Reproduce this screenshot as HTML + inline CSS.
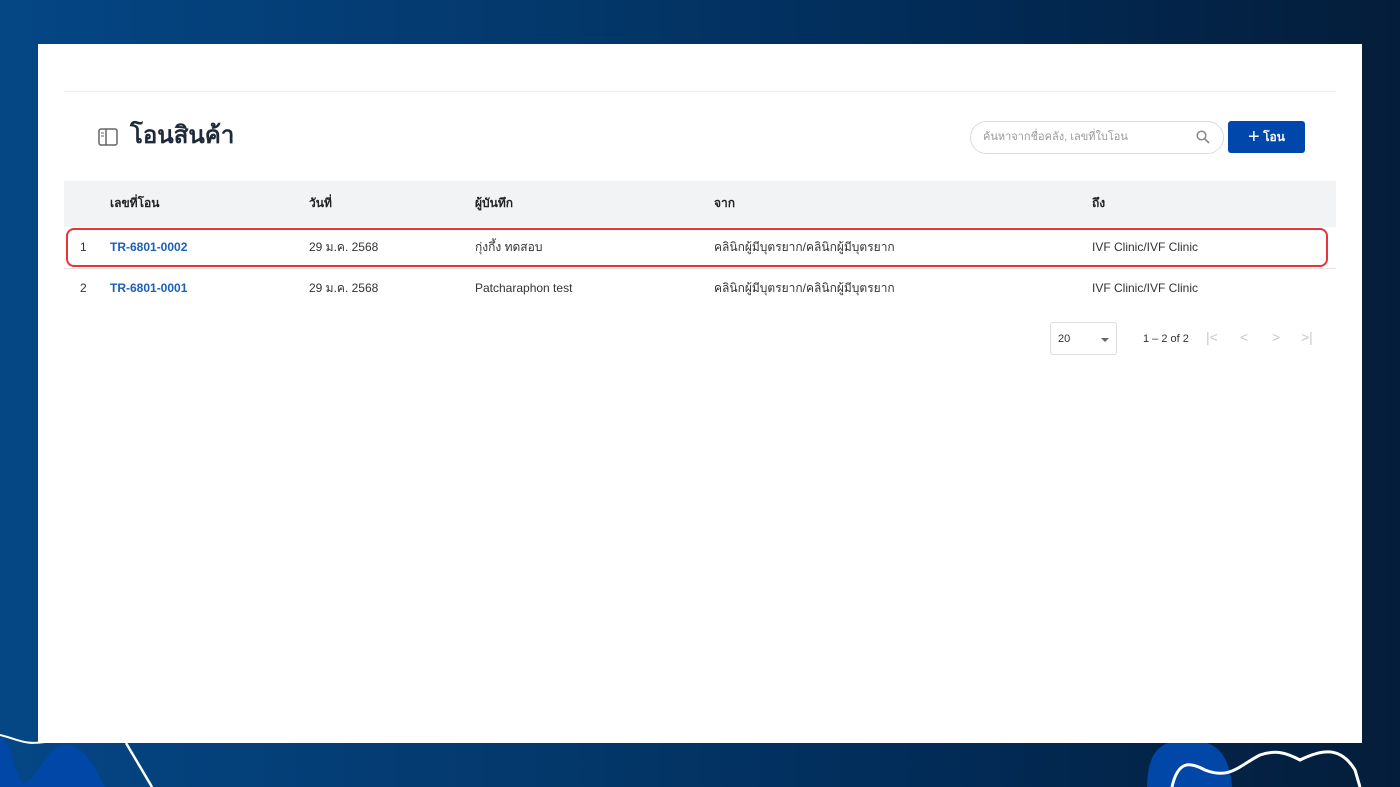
<!DOCTYPE html>
<html><head><meta charset="utf-8"><style>
*{margin:0;padding:0;box-sizing:border-box}
body{width:1400px;height:787px;overflow:hidden;position:relative;background:linear-gradient(90deg,#054685 0%,#03386b 40%,#022a55 70%,#041d3a 100%);font-family:"Liberation Sans","Noto Sans CJK SC",sans-serif;color:#333}
.card{position:absolute;left:38px;top:44px;width:1324px;height:699px;background:#fff}
.t{position:absolute;font-size:12px;line-height:15px;height:15px;color:#333;white-space:nowrap}
</style></head><body>
<svg style="position:absolute;left:0;top:700px" width="1400" height="87">
<path d="M0 40 C10 30 15 85 25 83 C40 75 50 40 70 45 C90 50 100 80 105 87 L0 87Z" fill="#0047a8"/>
<path d="M0 35 C20 40 25 45 45 42 C60 40 65 30 75 42" stroke="#fff" stroke-width="2" fill="none"/>
<path d="M126 43 L152 87" stroke="#fff" stroke-width="2.5" fill="none"/>
<path d="M1147 87 C1148 50 1160 40 1190 40 C1220 40 1230 60 1232 87Z" fill="#0047a8"/>
<path d="M1172 87 C1178 60 1190 62 1205 70 C1230 80 1240 65 1260 55 C1275 50 1285 52 1300 60 C1320 50 1340 45 1355 70 L1360 87" stroke="#fff" stroke-width="3" fill="none"/>
</svg>
<div class="card">
<div style="position:absolute;left:26px;top:47px;width:1272px;height:1px;background:#eee"></div>
<svg style="position:absolute;left:60px;top:84px" width="20" height="18" viewBox="0 0 20 18"><rect x="1" y="1" width="18" height="16" rx="2" fill="none" stroke="#666" stroke-width="1.5"/><line x1="8" y1="1" x2="8" y2="17" stroke="#666" stroke-width="1.5"/><line x1="3" y1="5" x2="6" y2="5" stroke="#666"/><line x1="3" y1="8" x2="6" y2="8" stroke="#666"/></svg>
<div class="t" style="left:92px;top:78px;font-size:24px;line-height:28px;height:28px;font-weight:bold;color:#1e2a3a">โอนสินค้า</div>
<div style="position:absolute;left:932px;top:77px;width:254px;height:33px;border:1px solid #d8dce2;border-radius:17px"></div>
<div class="t" style="left:945px;top:86px;color:#999;font-size:11px">ค้นหาจากชื่อคลัง, เลขที่ใบโอน</div>
<svg style="position:absolute;left:1158px;top:86px" width="14" height="14" viewBox="0 0 14 14"><circle cx="5.5" cy="5.5" r="4.3" fill="none" stroke="#888" stroke-width="1.5"/><line x1="8.7" y1="8.7" x2="13" y2="13" stroke="#888" stroke-width="1.7"/></svg>
<div style="position:absolute;left:1190px;top:77px;width:77px;height:32px;background:#0047ab;border-radius:3px;color:#fff;font-size:12px;font-weight:bold;line-height:32px;text-align:center"><span style="font-size:20px;vertical-align:-2px;font-weight:normal">+</span> โอน</div>
<div style="position:absolute;left:26px;top:137px;width:1272px;height:46px;background:#f2f3f5"></div>
<div class="t" style="left:72px;top:152px;font-weight:bold;color:#222">เลขที่โอน</div>
<div class="t" style="left:271px;top:152px;font-weight:bold;color:#222">วันที่</div>
<div class="t" style="left:437px;top:152px;font-weight:bold;color:#222">ผู้บันทึก</div>
<div class="t" style="left:676px;top:152px;font-weight:bold;color:#222">จาก</div>
<div class="t" style="left:1054px;top:152px;font-weight:bold;color:#222">ถึง</div>
<div style="position:absolute;left:26px;top:224px;width:1272px;height:1px;background:#e5e5e5"></div>
<div style="position:absolute;left:28px;top:184px;width:1262px;height:39px;border:2px solid #e8333b;border-radius:8px"></div>
<div class="t" style="left:42px;top:196px">1</div>
<div class="t" style="left:72px;top:196px;color:#1c5fb8;font-weight:bold">TR-6801-0002</div>
<div class="t" style="left:271px;top:196px">29 ม.ค. 2568</div>
<div class="t" style="left:437px;top:196px">กุ่งกึ้ง ทดสอบ</div>
<div class="t" style="left:676px;top:196px">คลินิกผู้มีบุตรยาก/คลินิกผู้มีบุตรยาก</div>
<div class="t" style="left:1054px;top:196px">IVF Clinic/IVF Clinic</div>
<div class="t" style="left:42px;top:237px">2</div>
<div class="t" style="left:72px;top:237px;color:#1c5fb8;font-weight:bold">TR-6801-0001</div>
<div class="t" style="left:271px;top:237px">29 ม.ค. 2568</div>
<div class="t" style="left:437px;top:237px">Patcharaphon test</div>
<div class="t" style="left:676px;top:237px">คลินิกผู้มีบุตรยาก/คลินิกผู้มีบุตรยาก</div>
<div class="t" style="left:1054px;top:237px">IVF Clinic/IVF Clinic</div>
<div style="position:absolute;left:1012px;top:278px;width:67px;height:33px;border:1px solid #ddd;border-radius:3px"></div>
<div class="t" style="left:1020px;top:288px;font-size:11px">20</div>
<div style="position:absolute;left:1063px;top:294px;border-left:4px solid transparent;border-right:4px solid transparent;border-top:4px solid #666"></div>
<div class="t" style="left:1105px;top:288px;font-size:11px">1 – 2 of 2</div>
<div class="t" style="left:1168px;top:286px;font-size:14px;color:#c8c8c8">|&lt;</div>
<div class="t" style="left:1202px;top:286px;font-size:14px;color:#c8c8c8">&lt;</div>
<div class="t" style="left:1234px;top:286px;font-size:14px;color:#c8c8c8">&gt;</div>
<div class="t" style="left:1263px;top:286px;font-size:14px;color:#c8c8c8">&gt;|</div>
</div>
</body></html>
